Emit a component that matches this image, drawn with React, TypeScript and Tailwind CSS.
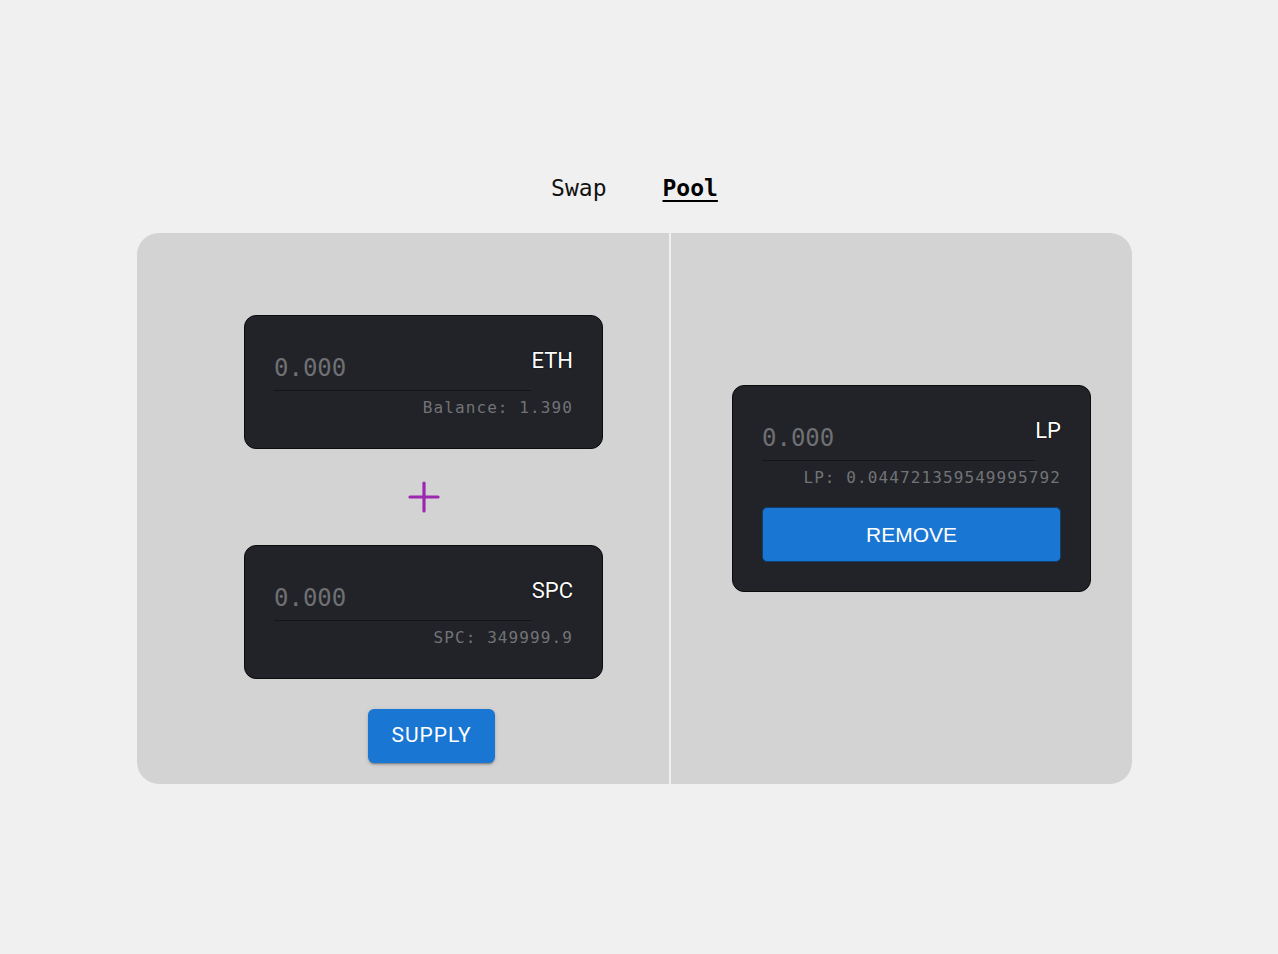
import React from "react";

const mono = "font-['DejaVu_Sans_Mono','Liberation_Mono',monospace]";

function TokenBox({ label, balance, children }: { label: string; balance: string; children?: React.ReactNode }) {
  return (
    <div className={`w-[359px] rounded-[12px] border border-[#0c0c0d] bg-[#212328] px-[29px] pt-[29px] ${children ? "pb-[29px]" : "pb-[32px]"}`}>
      <div className="flex h-[46px]">
        <div className={`flex-1 border-b border-[#131417] pb-[10px] flex items-end text-[24px] leading-[24px] text-[#6f7072] ${mono}`}>
          0.000
        </div>
        <div className="pt-[5px] text-[22px] leading-[22px] text-white font-['Roboto',sans-serif] [text-shadow:0_0_1px_#000,0_0_1px_#000]">
          {label}
        </div>
      </div>
      <div className={`mt-[9px] text-right text-[16px] leading-[16px] tracking-[1.1px] text-[#727376] ${mono}`}>
        {balance}
      </div>
      {children}
    </div>
  );
}

export default function App() {
  return (
    <div className="min-h-screen bg-[#f0f0f0] pt-[174px]">
      <div className={`flex h-[28px] justify-center gap-[56px] pr-[9px] text-[23px] leading-[28px] text-[#111] ${mono}`}>
        <span>Swap</span>
        <span className="font-bold text-black underline decoration-2 underline-offset-[4px]">Pool</span>
      </div>
      <div className="ml-[137px] mt-[31px] flex h-[551px] w-[995px] overflow-hidden rounded-[22px] bg-[#d3d3d3]">
        <div className="w-[532px] pl-[107px] pt-[82px]">
          <TokenBox label="ETH" balance="Balance: 1.390" />
          <div className="flex h-[96px] w-[359px] items-center justify-center">
            <svg width="32" height="32" viewBox="0 0 32 32">
              <path d="M16 2 V30 M2 16 H30" stroke="#9c27b0" strokeWidth="3.2" strokeLinecap="round" />
            </svg>
          </div>
          <TokenBox label="SPC" balance="SPC: 349999.9" />
          <button className="ml-[124px] mt-[30px] flex h-[54px] w-[127px] items-center justify-center rounded-[6px] bg-[#1976d2] font-['Roboto',sans-serif] text-[21px] tracking-[1px] text-white shadow-[0px_3px_1px_-2px_rgba(0,0,0,0.2),0px_2px_2px_0px_rgba(0,0,0,0.14),0px_1px_5px_0px_rgba(0,0,0,0.12)]">
            SUPPLY
          </button>
        </div>
        <div className="w-[2px] bg-[#efefef]" />
        <div className="flex-1 pl-[61px] pt-[152px]">
          <TokenBox label="LP" balance="LP: 0.044721359549995792">
            <button className="mt-[21px] flex h-[55px] w-full items-center justify-center rounded-[5px] border border-[#0f3f70] bg-[#1976d2] font-['Liberation_Sans',Arial,sans-serif] text-[21px] text-white">
              REMOVE
            </button>
          </TokenBox>
        </div>
      </div>
    </div>
  );
}
